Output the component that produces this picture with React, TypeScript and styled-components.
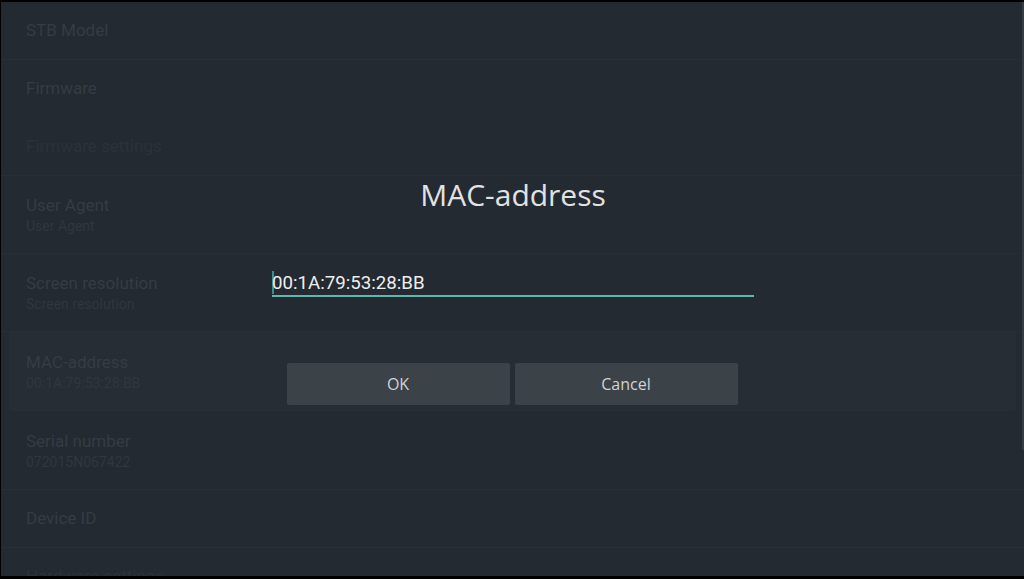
import React from "react";
import styled, { createGlobalStyle } from "styled-components";

const Global = createGlobalStyle`
  html, body { margin: 0; padding: 0; background: #000; }
  body { width: 1024px; height: 579px; overflow: hidden; }
`;

const Screen = styled.div`
  width: 1024px;
  height: 579px;
  box-sizing: border-box;
  padding: 2px 0 3px 1px;
  background: #000;
  display: flex;
`;

const Panel = styled.div`
  position: relative;
  flex: 1;
  background: #232a31;
  overflow: hidden;
  font-family: Roboto, "Noto Sans", sans-serif;
`;

const List = styled.div`
  display: flex;
  flex-direction: column;
`;

const Row = styled.div<{ $h: number; $tall?: boolean; $focused?: boolean; $noLine?: boolean }>`
  height: ${(p) => p.$h}px;
  flex: none;
  box-sizing: border-box;
  display: flex;
  flex-direction: column;
  justify-content: center;
  padding-top: ${(p) => (p.$tall ? "3px" : "0")};
  border-bottom: 1px solid ${(p) => (p.$noLine ? "transparent" : "#272e35")};
  margin: 0 ${(p) => (p.$focused ? "8px" : "0")};
  padding-left: ${(p) => (p.$focused ? "17px" : "25px")};
  background: ${(p) => (p.$focused ? "#262d34" : "transparent")};
  border-radius: ${(p) => (p.$focused ? "2px" : "0")};
`;

const Title = styled.div<{ $header?: boolean }>`
  font-size: 17px;
  line-height: 21px;
  color: ${(p) => (p.$header ? "#2b3239" : "#353c43")};
`;

const Sub = styled.div`
  font-size: 14px;
  line-height: 21px;
  color: #30373e;
`;

const Scrollbar = styled.div`
  position: absolute;
  right: 0;
  top: 0;
  width: 2px;
  height: 448px;
  background: #353c43;
`;

const Overlay = styled.div`
  position: absolute;
  inset: 0;
  display: flex;
  flex-direction: column;
  align-items: center;
  padding-top: 173px;
  box-sizing: border-box;
`;

const DialogTitle = styled.div`
  font-family: "Open Sans", "Noto Sans", sans-serif;
  font-size: 30px;
  line-height: 40px;
  color: #e2e2e2;
  margin-left: 1px;
`;

const Field = styled.div`
  width: 482px;
  margin-top: 54px;
  margin-left: 1px;
  box-sizing: border-box;
  border-bottom: 2px solid #62b7ac;
  display: flex;
  align-items: center;
  height: 28px;
`;

const Caret = styled.span`
  width: 2px;
  height: 23px;
  background: #3f8f86;
  margin-top: 0;
  margin-right: -2px;
`;

const FieldText = styled.span`
  font-family: Roboto, "Noto Sans", sans-serif;
  font-size: 18.7px;
  color: #eeeeee;
  margin-top: 2px;
`;

const Buttons = styled.div`
  display: flex;
  gap: 5px;
  margin-top: 66px;
  margin-left: -1px;
`;

const Button = styled.div`
  width: 223px;
  height: 42px;
  background: #3b4248;
  border-radius: 2px;
  display: flex;
  align-items: center;
  justify-content: center;
  font-family: "Open Sans", "Noto Sans", sans-serif;
  font-size: 16px;
  color: #d0d3d5;
`;

const rows = [
  { title: "STB Model", h: 58 },
  { title: "Firmware", h: 58, noLine: true },
  { title: "Firmware settings", h: 58, header: true },
  { title: "User Agent", sub: "User Agent", h: 78 },
  { title: "Screen resolution", sub: "Screen resolution", h: 78 },
  { title: "MAC-address", sub: "00:1A:79:53:28:BB", h: 79, focused: true },
  { title: "Serial number", sub: "072015N067422", h: 79 },
  { title: "Device ID", h: 58 },
  { title: "Hardware settings", h: 58, header: true },
];

export default function App() {
  return (
    <>
      <Global />
      <Screen>
        <Panel>
          <List>
            {rows.map((r) => (
              <Row
                key={r.title}
                $h={r.h}
                $tall={!!r.sub}
                $focused={r.focused}
                $noLine={r.noLine}
              >
                <Title $header={r.header}>{r.title}</Title>
                {r.sub && <Sub>{r.sub}</Sub>}
              </Row>
            ))}
          </List>
          <Scrollbar />
          <Overlay>
            <DialogTitle>MAC-address</DialogTitle>
            <Field>
              <Caret />
              <FieldText>00:1A:79:53:28:BB</FieldText>
            </Field>
            <Buttons>
              <Button>OK</Button>
              <Button>Cancel</Button>
            </Buttons>
          </Overlay>
        </Panel>
      </Screen>
    </>
  );
}
